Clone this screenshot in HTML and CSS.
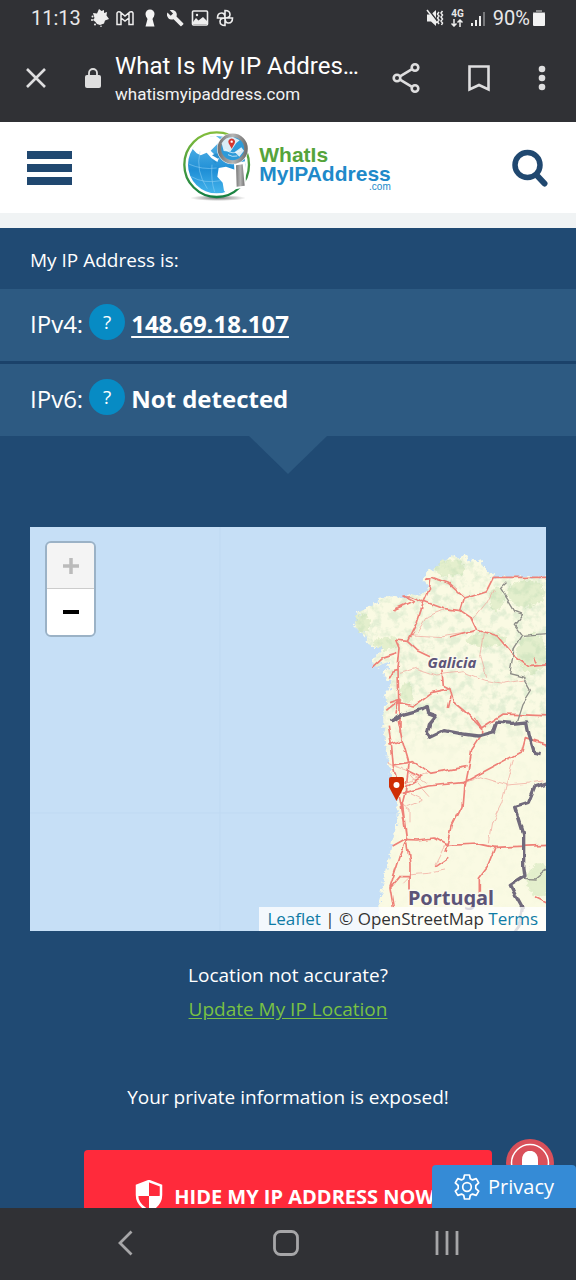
FILE: index.html
```html
<!DOCTYPE html>
<html lang="en">
<head>
<meta charset="utf-8">
<meta name="viewport" content="width=device-width, initial-scale=1">
<title>What Is My IP Address</title>
<link rel="stylesheet" href="styles.css">
</head>
<body>
<div class="status">
  <div class="status-left">
    <span class="clock">11:13</span>
    <svg class="glyph" viewBox="0 0 18 18" fill="#eee"><path d="M8 0l2.500 2L13 1v3l3-1-.5 3.500L18 10l-4 1.500-1 3-4 1.500-3-1-1.500-2L2 11l1.500-2L2 4l4 .5z"/><circle cx="1" cy="11" r="1"/><circle cx="1.500" cy="7.500" r="1"/><circle cx="4" cy="15.500" r="1"/><circle cx="10" cy="17.200" r=".8"/></svg>
    <svg class="glyph" viewBox="0 0 18 18" fill="none" stroke="#eee" stroke-width="1.500"><path d="M1 15.500V4q1-2 3-1l5 4 5-4q2-1 3 1v11.500h-4V9l-4 3-4-3v6.500zM5 9V4M13 9V4"/></svg>
    <svg class="glyph" viewBox="0 0 18 18" fill="#f4f4f4"><circle cx="9" cy="5" r="4.500"/><path d="M5 7h8l-1.500 3 2 7.500h-9l2-7.500z"/></svg>
    <svg class="glyph" viewBox="0 0 24 24" fill="#eee"><path d="M23 19l-9-9c.9-2.300.4-5-1.500-6.900C10.500 1.100 7.500.7 5 1.800L9.400 6 6.300 9 1.900 4.800c-1.200 2.400-.7 5.400 1.300 7.400 1.900 1.900 4.600 2.400 6.900 1.500l9.100 9.100c.4.400 1 .4 1.400 0l2.300-2.300c.5-.4.5-1.100.1-1.500z"/></svg>
    <svg class="glyph" viewBox="0 0 18 18"><rect x="1.500" y="2" width="15" height="14" rx="1" fill="none" stroke="#eee" stroke-width="1.600"/><path d="M2 15v-2l3-4 2.500 2.500L12 8l4 4v3z" fill="#eee"/><circle cx="6" cy="6" r="1.200" fill="#eee"/></svg>
    <svg class="glyph" viewBox="0 0 18 18" fill="none" stroke="#eee" stroke-width="1.600"><path d="M9 9V1.500q5 0 5 4Q14 9 9 9zM9 9h7.500q0 5-4 5Q9 14 9 9zM9 9v7.500q-5 0-5-4Q4 9 9 9zM9 9H1.500q0-5 4-5Q9 4 9 9z"/></svg>
  </div>
  <div class="status-right">
    <svg class="glyph" viewBox="0 0 18 18"><path d="M1 5.500h4L10 1v16l-5-4.500H1z" fill="#eee"/><path d="M2 0l10 13" stroke="#303135" stroke-width="1.600"/><path d="M1 1l10 13" stroke="#eee" stroke-width="1.500"/><path d="M13 3l-1.500 2 1.500 2-1.500 2 1.500 2-1.500 2 1.500 2M16.500 2L15 4l1.500 2L15 8l1.500 2-1.500 2 1.500 2-1 2" fill="none" stroke="#eee" stroke-width="1.500"/></svg>
    <span class="network">4G<svg class="arrows" viewBox="0 0 12 8" fill="none" stroke="#eee" stroke-width="1.500"><path d="M3 0v7M.5 4.500L3 7l2.500-2.500M9 8V1M6.500 3.500L9 1l2.500 2.500"/></svg></span>
    <svg class="signal" viewBox="0 0 15 18" fill="#eee"><rect x="0" y="14" width="2" height="3"/><rect x="4" y="11" width="2" height="6"/><rect x="8" y="7" width="2" height="10"/><rect x="12" y="3" width="2" height="14" fill="#77787b"/></svg>
    <span class="clock">90%</span>
    <svg class="battery" viewBox="0 0 12 18"><path d="M3 1h6v2h3v3H0V3h3z" fill="#88898b"/><rect y="4" width="12" height="13" rx="1" fill="#f2f2f2"/></svg>
  </div>
</div>

<div class="browser">
  <button class="icon-button" aria-label="Close tab"><svg width="20" height="20" viewBox="0 0 20 20" fill="none" stroke="#dededf" stroke-width="2.600"><path d="M1 1l18 18M19 1L1 19"/></svg></button>
  <svg class="lock" viewBox="0 0 16 20"><rect y="7" width="16" height="13" rx="2" fill="#dedede"/><path d="M4 8V5a4 4 0 0 1 8 0v3" fill="none" stroke="#dedede" stroke-width="1.800"/></svg>
  <div class="page-id">
    <div class="page-title">What Is My IP Addres…</div>
    <div class="page-host">whatismyipaddress.com</div>
  </div>
  <div class="browser-actions">
    <button class="icon-button" aria-label="Share"><svg width="28" height="32" viewBox="0 0 28 32" fill="none" stroke="#dededf" stroke-width="2.600"><circle cx="5" cy="16" r="3.300"/><circle cx="23" cy="5.500" r="3.300"/><circle cx="23" cy="26.500" r="3.300"/><path d="M8 14.300L20 7.200M8 17.700l12 7.100"/></svg></button>
    <button class="icon-button" aria-label="Bookmark"><svg width="22" height="28" viewBox="0 0 22 28" fill="none" stroke="#dededf" stroke-width="2.600"><path d="M1.500 2.500h19v23L11 21l-9.500 4.500z"/></svg></button>
    <button class="icon-button" aria-label="More options"><svg width="8" height="26" viewBox="0 0 8 26" fill="#dededf"><circle cx="4" cy="4" r="3.300"/><circle cx="4" cy="13" r="3.300"/><circle cx="4" cy="22" r="3.300"/></svg></button>
  </div>
</div>

<div class="viewport">
  <header class="site-header">
    <button class="icon-button menu" aria-label="Menu"><span></span><span></span><span></span></button>
    <a class="logo" href="#" aria-label="WhatIsMyIPAddress.com">
      <svg class="logo-globe" viewBox="35 25 216 216">
        <defs>
          <linearGradient id="ring" x1="0" y1="0" x2="0" y2="1"><stop offset="0" stop-color="#83bd3c"/><stop offset="1" stop-color="#148043"/></linearGradient>
          <linearGradient id="sea" x1="0" y1="0" x2="0" y2="1"><stop offset="0" stop-color="#5fb9ea"/><stop offset=".6" stop-color="#1f8fd6"/><stop offset="1" stop-color="#45b4ec"/></linearGradient>
          <linearGradient id="steel" x1="0" y1="0" x2="1" y2="0"><stop offset="0" stop-color="#777"/><stop offset=".5" stop-color="#b5b5b5"/><stop offset="1" stop-color="#737373"/></linearGradient>
          <radialGradient id="shade"><stop offset="0" stop-color="#777"/><stop offset="1" stop-color="#fff"/></radialGradient>
        </defs>
        <ellipse cx="146" cy="232" rx="84" ry="9" fill="url(#shade)"/>
        <circle cx="142" cy="132" r="97" fill="#fff" stroke="url(#ring)" stroke-width="7"/>
        <circle cx="142" cy="132" r="86" fill="url(#sea)"/>
        <path d="M70 85Q92 45 140 46l16 12-18 18-14 14 12 12 14 8-6 14-18-12-14-16-18 8-12-6z" fill="#fff"/>
        <path d="M148 142l22-4 22 8 34 8-8 30-26 22-20 12-8-8-4-24-16-18z" fill="#fff"/>
        <path d="M128 104l12-6 14 10-8 6zM128 118l14 6-4 6z" fill="#2a8fce"/>
        <path d="M58 130q40 18 84 12M66 168q38 22 88 12M92 92q-14 60 22 112M128 132q-4 46 8 82" fill="none" stroke="#9bd4f4" stroke-width="1.500"/>
        <path d="M194 128l34-6 2 78-32 6z" fill="#fff"/>
        <path d="M200 134l20-3 6 64-24 3z" fill="url(#steel)"/>
        <circle cx="190" cy="84" r="47" fill="#fff"/>
        <circle cx="190" cy="84" r="40" fill="#2d9ad9" stroke="url(#steel)" stroke-width="11"/>
        <path d="M157 68q12-20 34-19l20 10-10 8-18 26-20-2zM196 94l20-14 8 10-14 18z" fill="#d9ecf6"/>
        <path d="M168 86q22 20 48 2M176 102q12 8 28 4" stroke="#fff" stroke-width="2" fill="none"/>
        <path d="M187 84l-9-16a10 10 0 1 1 18 0z" fill="#d5362f"/><circle cx="187" cy="63" r="3.500" fill="#fff"/>
      </svg>
      <span class="logo-words"><span class="logo-green">WhatIs</span><span class="logo-blue">MyIPAddress</span><span class="logo-com">.com</span></span>
    </a>
    <button class="icon-button" aria-label="Search"><svg width="36" height="38" viewBox="0 0 36 38" fill="none" stroke="#204870"><circle cx="15.500" cy="16" r="12.500" stroke-width="5.500"/><path d="M24.500 26l8 8.500" stroke-width="6" stroke-linecap="round"/></svg></button>
  </header>

  <main class="content">
    <h1 class="ip-heading">My IP Address is:</h1>
    <div class="ip-rows">
      <div class="ip-row"><span>IPv4:</span><button class="help" aria-label="About IPv4">?</button><a class="ip-value" href="#">148.69.18.107</a></div>
      <div class="ip-row"><span>IPv6:</span><button class="help" aria-label="About IPv6">?</button><strong class="ip-value">Not detected</strong></div>
    </div>
    <svg class="pointer" viewBox="0 0 78 38"><path d="M0 0h78L39 38z" fill="#2d5a82"/></svg>

    <section class="map" aria-label="Map of IP location">
      <svg class="map-canvas" viewBox="30 527 516 404" preserveAspectRatio="xMaxYMid slice">
        <defs>
          <filter id="rough" x="-5%" y="-5%" width="110%" height="110%"><feTurbulence type="fractalNoise" baseFrequency=".07" numOctaves="3" seed="4"/><feDisplacementMap in="SourceGraphic" scale="26" xChannelSelector="R" yChannelSelector="G"/></filter>
          <filter id="wobble" x="-10%" y="-10%" width="120%" height="120%"><feTurbulence type="fractalNoise" baseFrequency=".025" numOctaves="2" seed="9"/><feDisplacementMap in="SourceGraphic" scale="16" xChannelSelector="R" yChannelSelector="G"/></filter>
          <filter id="forest" x="0" y="0" width="100%" height="100%"><feTurbulence type="fractalNoise" baseFrequency=".04" numOctaves="4" seed="12"/><feColorMatrix values="0 0 0 0 .77  0 0 0 0 .86  0 0 0 0 .66  4 0 0 0 -1.800"/><feComposite in2="SourceGraphic" operator="in"/></filter>
          <linearGradient id="south" x1="0" y1="0" x2="0" y2="1"><stop offset="0" stop-color="#fff"/><stop offset=".46" stop-color="#fff"/><stop offset=".56" stop-color="#222"/><stop offset="1" stop-color="#111"/></linearGradient>
          <mask id="north" maskUnits="userSpaceOnUse" x="0" y="0" width="640" height="1260"><rect width="640" height="1260" fill="url(#south)"/></mask>
          <path id="land" d="M660 172H460L440 148 425 128 405 120 390 125 375 106 360 118 335 106 318 120 300 130 280 148 262 160 248 178 265 195 258 215 240 224 215 222 195 235 170 232 140 228 120 240 100 255 80 265 58 275 50 300 40 320 60 335 74 345 84 372 105 383 130 385 115 402 94 430 110 442 130 430 152 425 140 450 124 460 140 480 157 475 150 500 132 520 142 550 130 580 130 620 134 660 146 730 160 790 173 850 173 900 156 970 143 1030 128 1100 118 1160V1260H660z"/>
        </defs>
        <rect x="-600" y="427" width="1200" height="604" fill="#c6dff6"/>
        <path d="M220 527v404M30 813h516" stroke="#bfd9f2"/>
        <g transform="translate(340 520) scale(.33333)">
          <use href="#land" fill="#fafae3" filter="url(#rough)"/>
          <g mask="url(#north)"><use href="#land" filter="url(#forest)"/></g>
          <g fill="#bcdba5" opacity=".35" filter="url(#rough)"><ellipse cx="330" cy="145" rx="45" ry="24"/><ellipse cx="68" cy="310" rx="22" ry="30"/><ellipse cx="470" cy="235" rx="22" ry="35"/><ellipse cx="560" cy="220" rx="55" ry="40"/><ellipse cx="575" cy="400" rx="45" ry="60"/><ellipse cx="140" cy="370" rx="40" ry="18"/><ellipse cx="200" cy="520" rx="20" ry="30"/><ellipse cx="600" cy="1080" rx="40" ry="50"/><ellipse cx="440" cy="360" rx="60" ry="20"/></g>
          <g fill="none" stroke="#f2aaa0" stroke-width="3" opacity=".75" filter="url(#wobble)">
            <path d="M215 345l90 5 100-15M180 460l50-15 60 20 80-10 60 25 60 10 60-10M430 340l-10 60 20 70M230 340l30-50 50-20M400 300l40-50 20-40M370 790l50-20 80 25 60-5 50-8M520 720l-20 70-15 60-30 60-10 60M140 730l60 20 60 40M200 750l70 80M210 820l40 20-50 20M180 850l30 20v40M205 1065l60-5 50-10M285 1035l30-60M190 1090l20-20v60M160 800l100-40M165 770l40 50"/>
          </g>
          <g fill="none" stroke="#ee8178" stroke-width="5" stroke-linejoin="round" filter="url(#wobble)">
            <path d="M650 172H460l-20 40-66 22-48-44-50-18-22 6 18-2-4 34-16 36-44-18h-16l28 14-60 28M252 244l60 22 50 6 12-38M362 272l30 20 18 38-80 24M410 330l62 18 44 54 50 38 60-6M252 244l-20 60-30 60 30 28 38 18M202 364l-32-4 10 24-6 60 2 90-8 50M98 440l30-28 44-14M142 480l14-24 16-4M136 574l34-28 50 12 54-40 56-12-20-10-6-64M330 506l10 40 36 30 48 48 66-42 150 6M322 564l8-34M150 545l30-10v100M425 624l-20-30M425 624v20l-30 46-10 60-10 50M372 790l-6 70-30 60-10 46-8 30M175 600l12 60 20 70-10 80-10 40 12 100M145 620l10 60 5 60 20 80M160 735l60-10 50 35 110-20M185 820l80-22 105-10 82-44 94-50 10-38 64 20M178 830l12 60 10 68-20 50-30 94 10 60M155 978l36-20 40 2 50-6 40 22 96-4 48 10 160-6M465 985l-20 50-30 40v40M200 970l10 60v80M148 675l40-15M205 750l40 20-50 30M150 1105l30-35h30M285 1040l40-28"/>
            <path d="M583 410l8 20M585 1130l40 20" />
          </g>
          <g fill="none" stroke="#8d8d88" stroke-width="4" filter="url(#wobble)"><path d="M502 185l-20 20 25 40 18 30 20 8-22 30 25 32-25 40-14 76 40 10 22 40-25 40-18 56M548 346l72-5M545 1075l40 2 40-32"/></g>
          <g fill="none" stroke="#716b7c" stroke-width="10" stroke-linejoin="round" filter="url(#wobble)"><path d="M152 606l34-22 36-10 40-14 4 22 22 8-20 24-6 24 10 14 40-20 44 8 60 8 44-12 10-30 46 4 44-4 8 42 14 46 20 4M630 786l-45 14-20 50-38 12 24 76v100l4 30-44 28 16 32 20 36-10 56-22 30-100 6"/></g>
        </g>
        <g class="map-label"><text class="region" x="452" y="668">Galicia</text><text class="country" x="451" y="905">Portugal</text></g>
        <path d="M396.500 801l-7.500-14v-8q0-2 2-2h11q2 0 2 2v8z" fill="#cf2e05"/><circle cx="396.500" cy="785" r="3" fill="#fff"/>
      </svg>
      <div class="zoom"><button aria-label="Zoom in" disabled><svg width="16" height="16" viewBox="0 0 16 16"><path d="M0 8h16M8 0v16" stroke="#bbb" stroke-width="3.500"/></svg></button><button aria-label="Zoom out"><svg width="16" height="16" viewBox="0 0 16 16"><path d="M0 8h16" stroke="#000" stroke-width="4"/></svg></button></div>
      <div class="attribution"><a href="#">Leaflet</a> | © OpenStreetMap <a href="#">Terms</a></div>
    </section>

    <p class="note">Location not accurate?<br><a class="update" href="#">Update My IP Location</a></p>
    <p class="note exposed">Your private information is exposed!</p>
    <button class="cta"><svg width="28" height="32" viewBox="0 0 28 32"><path d="M14 1l12 4.500V15q0 10-12 16Q2 25 2 15V5.500z" fill="#ff2a3b" stroke="#fff" stroke-width="2.500"/><path d="M14 1v15H2V5.500zM14 16h12q-1 10-12 15z" fill="#fff"/></svg>HIDE MY IP ADDRESS NOW</button>
  </main>

  <button class="bell" aria-label="Notifications"><svg viewBox="0 0 48 48"><circle cx="24" cy="24" r="24" fill="#d9505a"/><circle cx="24" cy="24" r="18.500" fill="none" stroke="#fff" stroke-width="1.500"/><path d="M22 12h4q6 2 6 9v7l3 4H13l3-4v-7q0-7 6-9z" fill="#fff"/></svg></button>
  <button class="privacy"><svg width="26" height="26" viewBox="0 0 26 26" fill="none" stroke="#fff" stroke-width="1.700" stroke-linejoin="round"><path d="M10.500 1h5l.8 3.700 2.200 1.200 3.700-1.300 2.500 4.300-2.900 2.600v3l2.900 2.600-2.500 4.300-3.700-1.300-2.200 1.200-.8 3.700h-5l-.8-3.700-2.200-1.200-3.700 1.300-2.500-4.300 2.900-2.600v-3L1.300 8.900l2.500-4.300 3.700 1.300 2.200-1.200z"/><circle cx="13" cy="13" r="4.300"/></svg>Privacy</button>
</div>

<nav class="system-nav">
  <button class="icon-button" aria-label="Back"><svg width="16" height="26" viewBox="0 0 16 26" fill="none" stroke="#a6a6a8" stroke-width="2.800"><path d="M14.500 1.500L3 13l11.500 11.500"/></svg></button>
  <button class="icon-button" aria-label="Home"><svg width="26" height="26" viewBox="0 0 26 26" fill="none" stroke="#a6a6a8" stroke-width="2.800"><rect x="1.500" y="1.500" width="23" height="23" rx="6"/></svg></button>
  <button class="icon-button" aria-label="Recent apps"><svg width="24" height="26" viewBox="0 0 24 26" stroke="#a6a6a8" stroke-width="2.800"><path d="M2 1v24M12 1v24M22 1v24"/></svg></button>
</nav>
</body>
</html>
```
FILE: styles.css
```css
* { box-sizing: border-box; }
body {
  margin: 0;
  height: 100vh;
  display: flex;
  flex-direction: column;
  overflow: hidden;
  background: #303135;
  color: #fff;
  font-family: "Open Sans", "Noto Sans", sans-serif;
}
svg { display: block; flex: none; }
button { font: inherit; color: inherit; border: 0; padding: 0; background: none; }
.icon-button { display: flex; align-items: center; justify-content: center; }

.status {
  display: flex;
  justify-content: space-between;
  flex: none;
  height: 36px;
  padding: 0 31px;
  font-family: Roboto, sans-serif;
  color: #e8e8e9;
}
.status-left, .status-right { display: flex; align-items: center; gap: 7px; }
.clock { font-size: 20px; line-height: 24px; }
.status-left .clock { margin-right: 3px; }
.status-right .battery { margin-left: -4px; }
.glyph { width: 18px; height: 18px; }
.network { font-size: 10px; line-height: 10px; font-weight: 700; }
.arrows { width: 12px; height: 8px; }
.signal { width: 15px; height: 18px; }
.battery { width: 12px; height: 18px; }

.browser {
  display: flex;
  align-items: center;
  flex: none;
  height: 86px;
  padding: 0 30px 2px 26px;
  font-family: Roboto, sans-serif;
}
.lock { width: 16px; height: 20px; margin: 0 14px 0 39px; }
.page-id { flex: 1; min-width: 0; }
.page-title {
  font-size: 24px;
  line-height: 32px;
  white-space: nowrap;
}
.page-host { font-size: 17px; line-height: 24px; color: #f2f2f2; }
.browser-actions { display: flex; align-items: center; gap: 48px; }

.viewport { position: relative; flex: 1; min-height: 0; overflow: hidden; background: #204a73; }
.site-header {
  display: flex;
  align-items: center;
  justify-content: space-between;
  height: 106px;
  padding: 0 28px 0 27px;
  background: #fff;
  border-bottom: 15px solid #f0f3f4;
}
.menu { flex-direction: column; gap: 5px; }
.menu span { width: 45px; height: 8px; background: #204870; }
.logo { display: flex; align-items: center; gap: 6px; padding: 0 12px 5px 0; text-decoration: none; }
.logo-globe { width: 72px; height: 72px; }
.logo-words {
  display: flex;
  flex-direction: column;
  padding-top: 6px;
  font: 700 21px/19px "Liberation Sans", Arial, sans-serif;
}
.logo-green { color: #55a43b; }
.logo-blue { color: #2089c9; }
.logo-com { align-self: flex-end; font-size: 10px; line-height: 8px; font-weight: 400; color: #2089c9; }

.ip-heading { margin: 0; padding: 18px 30px 14px; font-size: 19px; line-height: 29px; font-weight: 400; }
.ip-rows { display: grid; gap: 3px; background: #1b426a; }
.ip-row {
  display: flex;
  align-items: center;
  height: 72px;
  padding: 0 30px 4px;
  background: #2d5a82;
  font-size: 24px;
}
.help {
  width: 36px;
  height: 36px;
  margin: 0 6px 2px;
  border-radius: 50%;
  background: #078bc4;
  font-size: 19px;
  line-height: 36px;
}
.ip-value { color: #fff; font-weight: 700; text-underline-offset: 3px; text-decoration-thickness: 2px; }
.pointer { width: 78px; height: 38px; margin: 0 auto; }

.map { position: relative; margin: 53px 30px 0; height: 404px; overflow: hidden; }
.map-canvas { width: 100%; height: 100%; }
.map-label { text-anchor: middle; fill: #5c5478; stroke: #fcfbee; stroke-width: 3px; paint-order: stroke; font-family: "Noto Sans", sans-serif; font-weight: 700; }
.region { font-size: 15px; font-style: italic; }
.country { font-size: 20px; }
.zoom {
  position: absolute;
  top: 14px;
  left: 15px;
  display: grid;
  border: 2px solid #9bb2c6;
  border-radius: 6px;
  overflow: hidden;
}
.zoom button { display: flex; align-items: center; justify-content: center; width: 47px; height: 46px; background: #fff; }
.zoom button:disabled { background: #f4f4f4; border-bottom: 1px solid #ccc; }
.attribution {
  position: absolute;
  right: 0;
  bottom: 0;
  padding: 0 8px;
  background: rgba(255, 255, 255, .78);
  color: #333;
  font-size: 17px;
  line-height: 24px;
  white-space: nowrap;
}
.attribution a { color: #0e7ba5; text-decoration: none; }

.note { margin: 27px 30px 0; text-align: center; font-size: 19px; line-height: 34px; }
.update { color: #7ac143; text-underline-offset: 2px; }
.exposed { margin-top: 54px; }
.cta {
  display: flex;
  align-items: center;
  justify-content: center;
  gap: 11px;
  width: calc(100% - 168px);
  height: 92px;
  margin: 36px 84px 0;
  padding-right: 6px;
  border-radius: 4px;
  background: #ff2a3b;
  font-size: 20px;
  font-weight: 700;
  white-space: nowrap;
}
.bell { position: absolute; right: 22px; bottom: 21px; width: 48px; height: 48px; }
.privacy {
  position: absolute;
  right: 0;
  bottom: 0;
  display: flex;
  align-items: center;
  gap: 8px;
  height: 43px;
  padding: 0 22px;
  border-radius: 4px 4px 0 0;
  background: #358bd6;
  font-size: 20px;
}

.system-nav {
  display: grid;
  grid-template-columns: repeat(3, 1fr);
  flex: none;
  height: 72px;
  padding: 0 48px 2px 44px;
}
```
